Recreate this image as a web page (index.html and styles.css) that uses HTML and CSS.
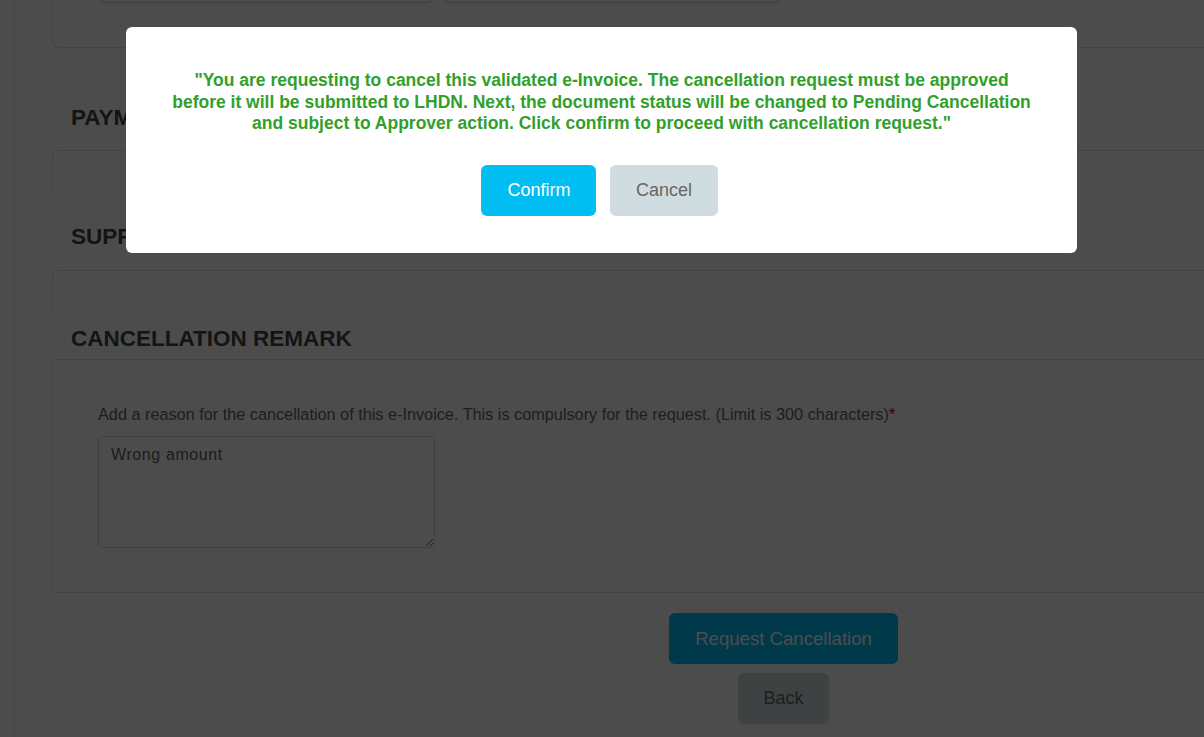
FILE: index.html
```html
<!DOCTYPE html>
<html lang="en">
<head>
<meta charset="utf-8">
<title>Cancel e-Invoice</title>
<link rel="stylesheet" href="styles.css">
</head>
<body>
<div class="page">
  <aside class="sidebar"></aside>
  <main class="main">
    <div class="card card-tail">
      <div class="tail-inputs">
        <span class="tail-input tail-a"></span>
        <span class="tail-input tail-b"></span>
      </div>
    </div>

    <h2 class="section-title title-pay">PAYMENT INFORMATION</h2>
    <div class="card card-collapsed"></div>

    <h2 class="section-title title-sup">SUPPLIER INFORMATION</h2>
    <div class="card card-collapsed"></div>

    <h2 class="section-title title-rem">CANCELLATION REMARK</h2>
    <div class="card card-remark">
      <label class="remark-label" for="remark">Add a reason for the cancellation of this e-Invoice. This is compulsory for the request. (Limit is 300 characters)<span class="req">*</span></label>
      <textarea id="remark" class="remark-input">Wrong amount</textarea>
    </div>

    <div class="actions">
      <button class="btn btn-request" type="button">Request Cancellation</button>
      <button class="btn btn-back" type="button">Back</button>
    </div>
  </main>
</div>

<div class="overlay">
  <div class="modal">
    <p class="modal-text">"You are requesting to cancel this validated e-Invoice. The cancellation request must be approved<br>before it will be submitted to LHDN. Next, the document status will be changed to Pending Cancellation<br>and subject to Approver action. Click confirm to proceed with cancellation request."</p>
    <div class="modal-actions">
      <button class="btn btn-confirm" type="button">Confirm</button>
      <button class="btn btn-cancel" type="button">Cancel</button>
    </div>
  </div>
</div>
</body>
</html>
```

FILE: styles.css
```css
html, body {
  margin: 0;
  padding: 0;
  height: 100%;
  overflow: hidden;
  background: #ffffff;
  font-family: "Liberation Sans", Arial, sans-serif;
}

.page {
  display: flex;
  min-height: 100%;
}

.sidebar {
  width: 14px;
  flex: 0 0 14px;
  border-right: 1px solid #e2e2e2;
}

.main {
  flex: 0 0 1500px;
  width: 1500px;
  padding-left: 37px;
  box-sizing: border-box;
}

.card {
  border: 1px solid #e2e2e2;
  background: #ffffff;
}

.card-tail {
  height: 48px;
  box-sizing: border-box;
  border-top: none;
  border-radius: 0 0 6px 6px;
  padding-left: 47px;
}

.tail-inputs {
  display: flex;
  gap: 13px;
}

.tail-input {
  display: block;
  height: 2px;
  border: 1px solid #d2d2d2;
  border-top: none;
  border-radius: 0 0 4px 4px;
}

.tail-a { width: 330px; }
.tail-b { width: 333px; }

.section-title {
  margin: 0;
  padding-left: 19px;
  font-size: 22.5px;
  line-height: 26px;
  font-weight: 700;
  color: #454545;
}

.title-pay { margin-top: 57px; margin-bottom: 19px; }
.title-sup { margin-top: 36px; margin-bottom: 20px; }
.title-rem { margin-top: 18px; margin-bottom: 7px; }

.card-collapsed {
  height: 38px;
  box-sizing: border-box;
  border-bottom: none;
  border-radius: 6px 6px 0 0;
}

.card-remark {
  border-radius: 6px;
  padding: 45px 45px 44px;
}

.remark-label {
  display: block;
  font-size: 16.25px;
  line-height: 18px;
  color: #666666;
  margin-bottom: 13px;
}

.req {
  color: #cc0000;
}

.remark-input {
  display: block;
  width: 337px;
  height: 112px;
  box-sizing: border-box;
  padding: 8px 12px;
  border: 1px solid #d6d6d6;
  border-radius: 4px;
  font-family: "Liberation Sans", Arial, sans-serif;
  font-size: 16px;
  letter-spacing: 0.6px;
  line-height: 20px;
  color: #606060;
  background: #ffffff;
}

.actions {
  display: flex;
  flex-direction: column;
  align-items: center;
  gap: 9px;
  margin-top: 20px;
}

.btn {
  height: 51px;
  border: none;
  border-radius: 6px;
  font-family: "Liberation Sans", Arial, sans-serif;
  font-size: 18px;
  cursor: pointer;
}

.btn-request {
  padding: 0 26px;
  font-size: 18.6px;
  background: #00bff3;
  color: #ffffff;
}

.btn-back {
  padding: 0 25px;
  background: #cfdde0;
  color: #666666;
}

.overlay {
  position: fixed;
  inset: 0;
  background: rgba(0, 0, 0, 0.7);
  display: flex;
  justify-content: center;
  align-items: flex-start;
}

.modal {
  margin-top: 27px;
  margin-right: 1px;
  width: 951px;
  box-sizing: border-box;
  padding: 43px 20px 37px;
  background: #ffffff;
  border-radius: 6px;
  text-align: center;
}

.modal-text {
  margin: 0;
  font-size: 17.5px;
  line-height: 21.5px;
  font-weight: 700;
  color: #31a02b;
}

.modal-actions {
  display: flex;
  justify-content: center;
  gap: 14px;
  margin-top: 30px;
  padding-right: 4px;
}

.btn-confirm {
  padding: 0 26px;
  background: #00bdf2;
  color: #ffffff;
}

.btn-cancel {
  padding: 0 25.5px;
  background: #cfdde0;
  color: #666666;
}
```
